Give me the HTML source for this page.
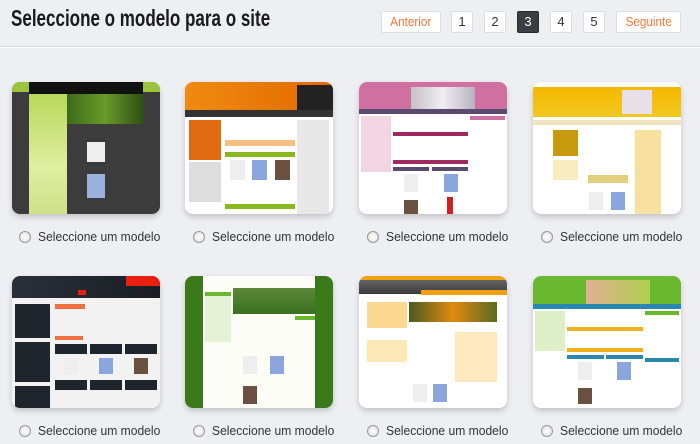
<!DOCTYPE html>
<html><head><meta charset="utf-8"><style>
*{margin:0;padding:0;box-sizing:border-box}
body{width:700px;height:444px;background:#eeeff3;font-family:"Liberation Sans",sans-serif;position:relative;overflow:hidden}
h1{position:absolute;left:11px;top:5px;font-size:23px;font-weight:bold;color:#1a1a1a;white-space:nowrap;transform:scaleX(.74);transform-origin:left}
.hr{position:absolute;left:0;top:46px;width:700px;height:1px;background:#d6d7db}
.hr2{position:absolute;left:0;top:47px;width:700px;height:1px;background:#fff}
.b{position:absolute;top:11px;height:22px;background:#fff;border:1px solid #dcdde0;border-radius:2px;font-size:13px;color:#333;text-align:center;line-height:20px}
.b span{display:inline-block;transform:scaleX(.9)}
.o{color:#f07a3a}
.a{background:#3a3d42;color:#fff;border-color:#2a2c30}
.c{position:absolute;width:148px;height:132px;border-radius:8px;overflow:hidden;box-shadow:0 3px 6px rgba(0,0,0,.18);background:#fff}
.c div{position:absolute}
.l{position:absolute;font-size:13px;color:#333;height:16px;line-height:16px;white-space:nowrap}
.l i{display:inline-block;width:12px;height:12px;border-radius:50%;border:1px solid #999;background:radial-gradient(#fff,#ddd);vertical-align:-2px;margin-right:7px}
.l span{display:inline-block;transform:scaleX(.93);transform-origin:left}
</style></head><body>
<h1>Seleccione o modelo para o site</h1>
<div class="b o" style="left:381px;width:60px"><span>Anterior</span></div>
<div class="b" style="left:451px;width:22px">1</div>
<div class="b" style="left:484px;width:22px">2</div>
<div class="b a" style="left:517px;width:22px">3</div>
<div class="b" style="left:550px;width:22px">4</div>
<div class="b" style="left:583px;width:22px">5</div>
<div class="b o" style="left:616px;width:65px"><span>Seguinte</span></div>
<div class="hr"></div><div class="hr2"></div>

<div class="c" style="left:12px;top:82px;background:#3c3c3c">
<div style="left:0;top:0;width:148px;height:10px;background:#9cc43a"></div>
<div style="left:17px;top:0;width:114px;height:12px;background:#111"></div>
<div style="left:17px;top:12px;width:38px;height:120px;background:linear-gradient(#b8d85a,#e0eea0 60%,#cfe08a)"></div>
<div style="left:55px;top:12px;width:76px;height:30px;background:linear-gradient(90deg,#3c6a1a,#6a9a2a,#2e5012)"></div>
<div style="left:75px;top:60px;width:18px;height:20px;background:#eee"></div>
<div style="left:75px;top:92px;width:18px;height:24px;background:#9ab0dd"></div>
</div>
<div class="c" style="left:185px;top:82px">
<div style="left:0;top:0;width:148px;height:28px;background:linear-gradient(90deg,#f08a10,#e06a00)"></div>
<div style="left:112px;top:3px;width:36px;height:30px;background:#222"></div>
<div style="left:0;top:28px;width:148px;height:7px;background:#333"></div>
<div style="left:4px;top:38px;width:32px;height:40px;background:#e06a10"></div>
<div style="left:4px;top:80px;width:32px;height:40px;background:#ddd"></div>
<div style="left:112px;top:38px;width:32px;height:94px;background:#e8e8e8"></div>
<div style="left:40px;top:58px;width:70px;height:6px;background:#f6c080"></div>
<div style="left:40px;top:70px;width:70px;height:5px;background:#8ab820"></div>
<div style="left:45px;top:78px;width:15px;height:20px;background:#eee"></div>
<div style="left:67px;top:78px;width:15px;height:20px;background:#8aa6dd"></div>
<div style="left:90px;top:78px;width:15px;height:20px;background:#6a5040"></div>
<div style="left:40px;top:122px;width:70px;height:5px;background:#8ab820"></div>
</div>
<div class="c" style="left:359px;top:82px">
<div style="left:0;top:0;width:148px;height:27px;background:#d070a0"></div>
<div style="left:52px;top:5px;width:64px;height:22px;background:linear-gradient(90deg,#c8c0c8,#f0eef0,#b8b0c0)"></div>
<div style="left:0;top:27px;width:148px;height:5px;background:#5a4a70"></div>
<div style="left:2px;top:34px;width:30px;height:56px;background:#f2d4e2"></div>
<div style="left:34px;top:50px;width:75px;height:4px;background:#a02a60"></div>
<div style="left:34px;top:78px;width:75px;height:4px;background:#a02a60"></div>
<div style="left:34px;top:85px;width:36px;height:4px;background:#5a4a70"></div>
<div style="left:73px;top:85px;width:36px;height:4px;background:#5a4a70"></div>
<div style="left:45px;top:92px;width:14px;height:18px;background:#eee"></div>
<div style="left:85px;top:92px;width:14px;height:18px;background:#8aa6dd"></div>
<div style="left:45px;top:118px;width:14px;height:14px;background:#6a5040"></div>
<div style="left:88px;top:115px;width:6px;height:17px;background:#d02020"></div>
<div style="left:111px;top:34px;width:35px;height:4px;background:#d070a0"></div>
</div>
<div class="c" style="left:533px;top:82px">
<div style="left:0;top:5px;width:148px;height:30px;background:linear-gradient(#f5b800,#f0c820)"></div>
<div style="left:89px;top:8px;width:30px;height:24px;background:#e8e0e8"></div>
<div style="left:0;top:38px;width:148px;height:5px;background:#f0e4c0"></div>
<div style="left:20px;top:48px;width:25px;height:26px;background:#c89a10"></div>
<div style="left:20px;top:78px;width:25px;height:20px;background:#f8ecc0"></div>
<div style="left:102px;top:48px;width:26px;height:84px;background:#f8e0a0"></div>
<div style="left:55px;top:93px;width:40px;height:8px;background:#e0d080"></div>
<div style="left:56px;top:110px;width:14px;height:18px;background:#eee"></div>
<div style="left:78px;top:110px;width:14px;height:18px;background:#8aa6dd"></div>
</div>
<div class="c" style="left:12px;top:276px;background:#f2f2f2">
<div style="left:0;top:0;width:148px;height:22px;background:linear-gradient(90deg,#2a3038,#1a1e24)"></div>
<div style="left:114px;top:0;width:34px;height:10px;background:#e82010"></div>
<div style="left:66px;top:14px;width:8px;height:5px;background:#e82010"></div>
<div style="left:3px;top:28px;width:35px;height:34px;background:#1e252c"></div>
<div style="left:3px;top:66px;width:35px;height:40px;background:#1e252c"></div>
<div style="left:3px;top:110px;width:35px;height:22px;background:#1e252c"></div>
<div style="left:43px;top:28px;width:30px;height:5px;background:#f07040"></div>
<div style="left:43px;top:60px;width:28px;height:4px;background:#f07040"></div>
<div style="left:43px;top:68px;width:32px;height:10px;background:#1e252c"></div>
<div style="left:78px;top:68px;width:32px;height:10px;background:#1e252c"></div>
<div style="left:113px;top:68px;width:32px;height:10px;background:#1e252c"></div>
<div style="left:43px;top:104px;width:32px;height:10px;background:#1e252c"></div>
<div style="left:78px;top:104px;width:32px;height:10px;background:#1e252c"></div>
<div style="left:113px;top:104px;width:32px;height:10px;background:#1e252c"></div>
<div style="left:52px;top:82px;width:14px;height:16px;background:#eee"></div>
<div style="left:87px;top:82px;width:14px;height:16px;background:#8aa6dd"></div>
<div style="left:122px;top:82px;width:14px;height:16px;background:#6a5040"></div>
</div>
<div class="c" style="left:185px;top:276px;background:#3a7a1a">
<div style="left:18px;top:0;width:112px;height:132px;background:#fbfdf6"></div>
<div style="left:48px;top:12px;width:82px;height:26px;background:linear-gradient(#5a8a3a,#3a7020)"></div>
<div style="left:20px;top:16px;width:26px;height:50px;background:#e6f2d6"></div>
<div style="left:20px;top:16px;width:26px;height:4px;background:#6ab830"></div>
<div style="left:110px;top:40px;width:20px;height:4px;background:#6ab830"></div>
<div style="left:58px;top:80px;width:14px;height:18px;background:#eee"></div>
<div style="left:85px;top:80px;width:14px;height:18px;background:#8aa6dd"></div>
<div style="left:58px;top:110px;width:14px;height:18px;background:#6a5040"></div>
</div>
<div class="c" style="left:359px;top:276px">
<div style="left:0;top:0;width:148px;height:4px;background:#f0a010"></div>
<div style="left:0;top:4px;width:148px;height:14px;background:linear-gradient(#666,#3a3a3a)"></div>
<div style="left:62px;top:14px;width:86px;height:5px;background:#f0a010"></div>
<div style="left:8px;top:26px;width:40px;height:26px;background:#fbd890"></div>
<div style="left:8px;top:64px;width:40px;height:22px;background:#fde8b8"></div>
<div style="left:50px;top:26px;width:88px;height:20px;background:linear-gradient(90deg,#4a5a20,#e08a10,#5a6a20)"></div>
<div style="left:96px;top:56px;width:42px;height:50px;background:#fde8c0"></div>
<div style="left:54px;top:108px;width:14px;height:18px;background:#eee"></div>
<div style="left:74px;top:108px;width:14px;height:18px;background:#8aa6dd"></div>
</div>
<div class="c" style="left:533px;top:276px">
<div style="left:0;top:0;width:148px;height:28px;background:#6ab830"></div>
<div style="left:53px;top:4px;width:64px;height:24px;background:linear-gradient(90deg,#e0b090,#b0d050)"></div>
<div style="left:0;top:28px;width:148px;height:5px;background:#2a88b0"></div>
<div style="left:2px;top:35px;width:30px;height:40px;background:#dff0c8"></div>
<div style="left:34px;top:51px;width:76px;height:4px;background:#f0b020"></div>
<div style="left:34px;top:72px;width:76px;height:4px;background:#f0b020"></div>
<div style="left:34px;top:79px;width:37px;height:4px;background:#2a88b0"></div>
<div style="left:73px;top:79px;width:37px;height:4px;background:#2a88b0"></div>
<div style="left:45px;top:86px;width:14px;height:18px;background:#eee"></div>
<div style="left:84px;top:86px;width:14px;height:18px;background:#8aa6dd"></div>
<div style="left:45px;top:112px;width:14px;height:16px;background:#6a5040"></div>
<div style="left:112px;top:35px;width:34px;height:4px;background:#6ab830"></div>
<div style="left:112px;top:82px;width:34px;height:4px;background:#2a88b0"></div>
</div>

<div class="l" style="left:19px;top:229px"><i></i><span>Seleccione um modelo</span></div>
<div class="l" style="left:193px;top:229px"><i></i><span>Seleccione um modelo</span></div>
<div class="l" style="left:367px;top:229px"><i></i><span>Seleccione um modelo</span></div>
<div class="l" style="left:541px;top:229px"><i></i><span>Seleccione um modelo</span></div>
<div class="l" style="left:19px;top:423px"><i></i><span>Seleccione um modelo</span></div>
<div class="l" style="left:193px;top:423px"><i></i><span>Seleccione um modelo</span></div>
<div class="l" style="left:367px;top:423px"><i></i><span>Seleccione um modelo</span></div>
<div class="l" style="left:541px;top:423px"><i></i><span>Seleccione um modelo</span></div>
</body></html>
